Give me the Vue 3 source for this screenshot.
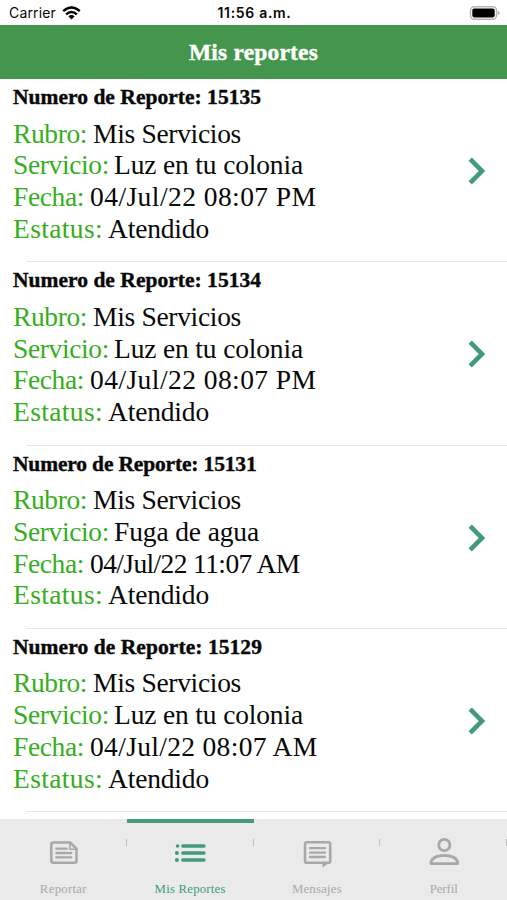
<script setup>
import { h } from 'vue'

const ctx = document.createElement('canvas').getContext('2d')

// Text whose tracking is computed so the run fills the given width
const Fit = (props) => {
  const family = props.family || 'Liberation Serif'
  ctx.font = `${props.weight || 400} ${props.size}px "${family}"`
  const spacing = (props.width - ctx.measureText(props.text).width) / props.text.length
  return h('span', {
    style: {
      fontFamily: `"${family}", serif`,
      fontSize: props.size + 'px',
      fontWeight: props.weight || 400,
      letterSpacing: spacing.toFixed(3) + 'px',
      whiteSpace: 'pre',
    },
  }, props.text)
}
Fit.props = ['text', 'size', 'width', 'weight', 'family']

const makeReport = (id, idWidth, service, serviceWidth, date, dateWidth) => ({
  id,
  idWidth,
  fields: [
    { label: 'Rubro:', labelWidth: 74, offset: 80, value: 'Mis Servicios', width: 148 },
    { label: 'Servicio:', labelWidth: 96, offset: 101, value: service, width: serviceWidth },
    { label: 'Fecha:', labelWidth: 71, offset: 77, value: date, width: dateWidth },
    { label: 'Estatus:', labelWidth: 90, offset: 95, value: 'Atendido', width: 101 },
  ],
})

const reports = [
  makeReport('15135', 248, 'Luz en tu colonia', 189, '04/Jul/22 08:07 PM', 226.5),
  makeReport('15134', 248, 'Luz en tu colonia', 189, '04/Jul/22 08:07 PM', 226.5),
  makeReport('15131', 243.5, 'Fuga de agua', 145, '04/Jul/22 11:07 AM', 211),
  makeReport('15129', 249, 'Luz en tu colonia', 189, '04/Jul/22 08:07 AM', 229),
]

const tabs = [
  { name: 'Reportar', width: 47, icon: 'news' },
  { name: 'Mis Reportes', width: 71, icon: 'list', active: true },
  { name: 'Mensajes', width: 50, icon: 'message' },
  { name: 'Perfil', width: 28, icon: 'person' },
]
</script>

<template>
  <div class="screen">
    <div class="status">
      <div class="carrier">
        <Fit text="Carrier" :size="14" :width="47" family="Inter" />
        <svg width="19" height="14" viewBox="0 0 19 14">
          <g fill="none" stroke="#000" stroke-width="2.4">
            <path d="M1.2 5.2Q9.5 -2.2 17.8 5.2" />
            <path d="M4.1 8.4Q9.5 3.7 14.9 8.4" />
          </g>
          <path d="M6.4 10.2Q9.5 7.7 12.6 10.2L9.5 13.5Z" />
        </svg>
      </div>
      <Fit text="11:56 a.m." :size="14" :width="74" :weight="600" family="Inter" />
      <div class="battery">
        <svg width="31" height="14" viewBox="0 0 31 14">
          <rect x="1.5" y=".8" width="26" height="12.4" rx="3.6" fill="#fff" stroke="#b5b5b5" stroke-width="1.4" />
          <rect x="3.3" y="2.6" width="22.4" height="8.8" rx="1.8" />
          <path d="M28.8 4.8Q30.8 5.6 30.8 7T28.8 9.2Z" fill="#b5b5b5" />
        </svg>
      </div>
    </div>

    <header class="header">
      <Fit text="Mis reportes" :size="23.5" :width="129" :weight="700" />
    </header>

    <main class="list">
      <article v-for="r in reports" :key="r.id" class="report">
        <div class="details">
          <h2 class="number">
            <Fit :text="'Numero de Reporte: ' + r.id" :size="21.5" :width="r.idWidth" :weight="700" />
          </h2>
          <div v-for="f in r.fields" :key="f.label" class="field">
            <span class="label" :style="{ width: f.offset + 'px' }">
              <Fit :text="f.label" :size="27.5" :width="f.labelWidth" />
            </span>
            <Fit :text="f.value" :size="27.5" :width="f.width" />
          </div>
        </div>
        <svg class="chevron" width="18" height="28" viewBox="0 0 18 28">
          <path d="M2.2 2.2L14 14L2.2 25.8" fill="none" stroke="#419a80" stroke-width="4.6" />
        </svg>
      </article>
    </main>

    <nav class="tabs">
      <div v-for="t in tabs" :key="t.name" class="tab" :class="{ active: t.active }">
        <svg class="icon" width="34" height="32" viewBox="0 0 34 32" fill="none" stroke="currentColor">
          <template v-if="t.icon === 'news'">
            <path d="M7.3 5.6H24.3L30.5 11.8V23.8Q30.5 25.8 28.5 25.8H7.3Q5.3 25.8 5.3 23.8V7.6Q5.3 5.6 7.3 5.6Z" stroke-width="2.5" />
            <path d="M23.9 6V12.3H30.3" stroke-width="1.6" />
            <path d="M10.3 11.7H20.8M10.3 16H25.3M10.3 20.4H25.3" stroke-width="2.3" stroke-linecap="round" />
          </template>
          <template v-else-if="t.icon === 'list'">
            <path d="M10 9H30.8M10 16H30.8M10 23H30.8" stroke-width="3.7" stroke-linecap="round" />
            <g fill="currentColor" stroke="none">
              <circle cx="4.6" cy="9" r="1.8" />
              <circle cx="3.9" cy="16" r="2" />
              <circle cx="3.9" cy="23" r="2" />
            </g>
          </template>
          <template v-else-if="t.icon === 'message'">
            <path d="M6.8 5.2H28.4Q30.2 5.2 30.2 7V24Q30.2 25.8 28.4 25.8H6.8Q5 25.8 5 24V7Q5 5.2 6.8 5.2Z" stroke-width="2.6" />
            <path d="M22.5 26V30.4L29 26Z" fill="currentColor" stroke="none" />
            <path d="M10 11.2H25M10 15.6H25M10 20H25" stroke-width="2.3" stroke-linecap="round" />
          </template>
          <template v-else>
            <circle cx="17.3" cy="8" r="5.6" stroke-width="2.8" />
            <path d="M4 26.7V24.6Q6.5 18.5 17.3 18.5T30.6 24.6V26.7Z" stroke-width="2.8" stroke-linejoin="round" />
          </template>
        </svg>
        <Fit :text="t.name" :size="12.8" :width="t.width" />
      </div>
    </nav>
  </div>
</template>

<style>
body {
  margin: 0;
  overflow: hidden;
  background: #fff;
}
</style>

<style scoped>
.screen {
  display: flex;
  flex-direction: column;
  width: 507px;
  height: 900px;
  background: #fff;
  color: #080808;
  overflow: hidden;
}
.status {
  display: grid;
  grid-template-columns: 1fr auto 1fr;
  align-items: center;
  height: 25px;
  padding: 1px 7px 0 9px;
  box-sizing: border-box;
  line-height: 24px;
  flex: none;
}
.carrier {
  display: flex;
  align-items: center;
  gap: 6px;
}
.battery {
  display: flex;
  justify-content: flex-end;
}
.header {
  display: flex;
  align-items: center;
  justify-content: center;
  height: 54px;
  background: #43964b;
  color: #fff;
  -webkit-text-stroke: 0.4px currentColor;
  flex: none;
}
.list {
  flex: 1;
  min-height: 0;
  overflow: hidden;
}
.report {
  display: flex;
  align-items: center;
  justify-content: space-between;
  height: 183.3px;
  box-sizing: border-box;
  padding: 5px 21px 4px 13px;
  background: linear-gradient(#e6e6e6, #e6e6e6) 26px 100% / 481px 1px no-repeat;
}
.details {
  align-self: flex-start;
}
.number {
  margin: 0 0 6.6px;
  height: 27px;
  line-height: 27px;
  font-size: 21px;
  -webkit-text-stroke: 0.4px currentColor;
}
.field {
  display: flex;
  height: 31.75px;
  line-height: 31.75px;
}
.label {
  color: #35ae20;
  flex: none;
}
.chevron {
  display: block;
}
.tabs {
  display: grid;
  grid-template-columns: repeat(4, 1fr);
  height: 81px;
  background: #eaeaea;
  flex: none;
}
.tab {
  display: flex;
  flex-direction: column;
  align-items: center;
  box-sizing: border-box;
  border-top: 4px solid transparent;
  padding-top: 14px;
  line-height: 16px;
  color: #a8a8a8;
  background: linear-gradient(#bdbdbd, #bdbdbd) 100% 16px / 1px 7px no-repeat;
}
.tab.active {
  color: #419a80;
  border-top-color: #469a80;
}
.icon {
  margin-bottom: 12px;
}
</style>
